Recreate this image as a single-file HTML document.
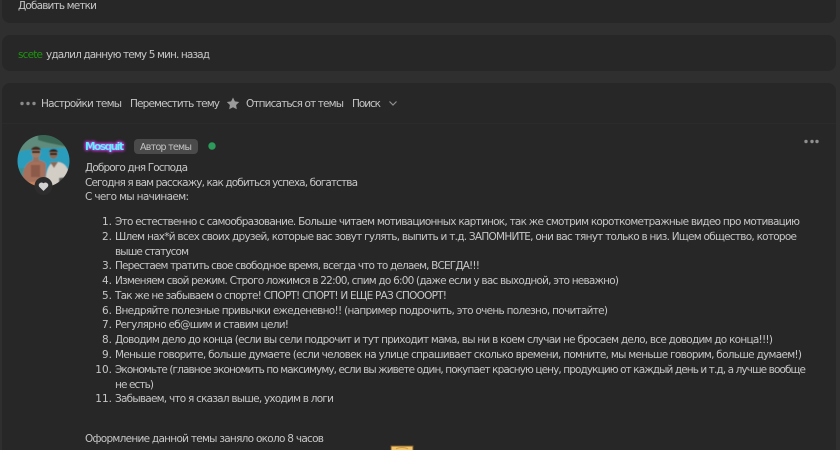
<!DOCTYPE html>
<html lang="ru"><head><meta charset="utf-8"><style>
html,body{margin:0;padding:0;width:840px;height:450px;overflow:hidden;background:#2f2f2f}
svg{display:block}
text{font-family:"DejaVu Sans","Liberation Sans",sans-serif;font-size:10.5px;fill:#c6c6c6}
.t{fill:#c6c6c6}
</style></head><body>
<svg width="840" height="450" viewBox="0 0 840 450" xmlns="http://www.w3.org/2000/svg">
<defs>
<clipPath id="av"><circle cx="43.5" cy="161" r="26"/></clipPath>
<filter id="b" x="-10%" y="-10%" width="120%" height="120%"><feGaussianBlur stdDeviation=".5"/></filter>
</defs>
<rect x="2" y="-20" width="834" height="43" rx="8" fill="#272727"/>
<rect x="2" y="35" width="834" height="36" rx="8" fill="#272727"/>
<rect x="2" y="83" width="834" height="380" rx="8" fill="#272727"/>
<rect x="2" y="123" width="834" height="1" fill="#2b2b2b"/>

<text x="18" y="9" textLength="79" class="t">Добавить метки</text>
<text x="18" y="58" textLength="25" style="fill:#1f9410">scete</text>
<text x="46" y="58" textLength="164" class="t">удалил данную тему 5 мин. назад</text>

<circle cx="22" cy="103.5" r="1.7" fill="#8a8a8a"/><circle cx="28" cy="103.5" r="1.7" fill="#8a8a8a"/><circle cx="34" cy="103.5" r="1.7" fill="#8a8a8a"/>
<text x="41" y="107" textLength="81" class="t">Настройки темы</text>
<text x="130" y="107" textLength="90" class="t">Переместить тему</text>
<path d="M233 97.5l1.9 3.9 4.3.6-3.1 3 .7 4.3-3.8-2-3.8 2 .7-4.3-3.1-3 4.3-.6z" fill="#9a9a9a"/>
<text x="246" y="107" textLength="98" class="t">Отписаться от темы</text>
<text x="352" y="107" textLength="29" class="t">Поиск</text>
<path d="M389.500 101.500l3.500 3.500 3.500-3.500" fill="none" stroke="#8f8f8f" stroke-width="1.200"/>

<g clip-path="url(#av)"><g filter="url(#b)">
<rect x="15" y="133" width="57" height="57" fill="#2a9dbd"/>
<path d="M15 133h57v16c-8-2-14-1-20-1-12 0-24 1-37 5z" fill="#5f8c7c"/>
<path d="M38 133h34v15c-10-3-22-4-34-8z" fill="#3b6654"/>
<path d="M15 168h12v22H15z" fill="#3c8f96"/>
<path d="M24 190c-2-10-2-20 3-26 3-3 6-4 9-4 4 0 8 1 10 4l-1 26z" fill="#a5705c"/>
<path d="M31 165h9v12h-9z" fill="#8c5a4a"/>
<path d="M26 182h19v8H26z" fill="#c9825c"/>
<path d="M33 157h6v5h-6z" fill="#96705c"/>
<ellipse cx="36" cy="152.500" rx="4.600" ry="5.300" fill="#a07a64"/>
<path d="M31 150c1-4.500 9-4.500 10 0z" fill="#3f2c20"/><rect x="32" y="151" width="8" height="2" fill="#1f1f1f"/>
<path d="M46 190c-1-10 0-20 4-25 2-2 4-3 7-3 4 0 8 2 10 6l5 8v14z" fill="#d2cec6"/>
<path d="M50 162l4 6 4-6z" fill="#8a6a56"/>
<ellipse cx="53.500" cy="154" rx="4.200" ry="4.900" fill="#8a6a56"/>
<path d="M49 152c1-4 8-4 9 0z" fill="#32241a"/><rect x="50" y="153" width="7" height="2" fill="#1f1f1f"/>
<path d="M59 178l8-1v13h-8z" fill="#55524e"/>
</g></g>
<circle cx="43.500" cy="186" r="9" fill="#2d2d2d"/>
<path d="M43.500 191l-4.300-4.200a2.800 2.800 0 0 1 4.300-3.500 2.800 2.800 0 0 1 4.300 3.500z" fill="#d2d2d2"/>

<text x="85" y="150" textLength="39" style="font-weight:bold;fill:#5ff0ff;filter:drop-shadow(0 0 1.500px #e03cf8) drop-shadow(0 0 1px #d23cf0)">Mosquit</text>
<rect x="134" y="139" width="64" height="15" rx="4" fill="#4a4a4a"/>
<text x="140" y="150" textLength="52" style="font-size:9.500px;fill:#c4c4c4">Автор темы</text>
<circle cx="212" cy="146" r="3.700" fill="#2c9a5b"/>
<circle cx="806" cy="141.500" r="1.700" fill="#8f8f8f"/><circle cx="812" cy="141.500" r="1.700" fill="#8f8f8f"/><circle cx="817" cy="141.500" r="1.700" fill="#8f8f8f"/>

<text x="85" y="171" textLength="103" class="t">Доброго дня Господа</text>
<text x="85" y="186" textLength="273" class="t">Сегодня я вам расскажу, как добиться успеха, богатства</text>
<text x="85" y="200" textLength="104" class="t">С чего мы начинаем:</text>

<g text-anchor="end" style="font-size:10px">
<text x="112" y="225">1.</text><text x="112" y="240">2.</text><text x="112" y="269">3.</text><text x="112" y="284">4.</text><text x="112" y="299">5.</text><text x="112" y="314">6.</text><text x="112" y="328">7.</text><text x="112" y="343">8.</text><text x="112" y="358">9.</text><text x="112" y="373">10.</text><text x="112" y="402">11.</text>
</g>
<text x="115" y="225" textLength="685" class="t">Это естественно с самообразование. Больше читаем мотивационных картинок, так же смотрим короткометражные видео про мотивацию</text>
<text x="115" y="240" textLength="682" class="t">Шлем нах*й всех своих друзей, которые вас зовут гулять, выпить и т.д. ЗАПОМНИТЕ, они вас тянут только в низ. Ищем общество, которое</text>
<text x="115" y="255" textLength="74" class="t">выше статусом</text>
<text x="115" y="269" textLength="365" class="t">Перестаем тратить свое свободное время, всегда что то делаем, ВСЕГДА!!!</text>
<text x="115" y="284" textLength="504" class="t">Изменяем свой режим. Строго ложимся в 22:00, спим до 6:00 (даже если у вас выходной, это неважно)</text>
<text x="115" y="299" textLength="332" class="t">Так же не забываем о спорте! СПОРТ! СПОРТ! И ЕЩЕ РАЗ СПОООРТ!</text>
<text x="115" y="314" textLength="493" class="t">Внедряйте полезные привычки ежеденевно!! (например подрочить, это очень полезно, почитайте)</text>
<text x="115" y="328" textLength="174" class="t">Регулярно еб@шим и ставим цели!</text>
<text x="115" y="343" textLength="658" class="t">Доводим дело до конца (если вы сели подрочит и тут приходит мама, вы ни в коем случаи не бросаем дело, все доводим до конца!!!)</text>
<text x="115" y="358" textLength="687" class="t">Меньше говорите, больше думаете (если человек на улице спрашивает сколько времени, помните, мы меньше говорим, больше думаем!)</text>
<text x="115" y="373" textLength="691" class="t">Экономьте (главное экономить по максимуму, если вы живете один, покупает красную цену, продукцию от каждый день и т.д, а лучше вообще</text>
<text x="115" y="388" textLength="39" class="t">не есть)</text>
<text x="115" y="402" textLength="219" class="t">Забываем, что я сказал выше, уходим в логи</text>
<text x="85" y="442" textLength="239" class="t">Оформление данной темы заняло около 8 часов</text>

<rect x="391" y="446" width="22" height="6" fill="#f3c56b" stroke="#7a5a2a" stroke-width="1"/>
<path d="M396 449c3-2 9-2 12 0" fill="none" stroke="#c99a45"/>
</svg>
</body></html>
